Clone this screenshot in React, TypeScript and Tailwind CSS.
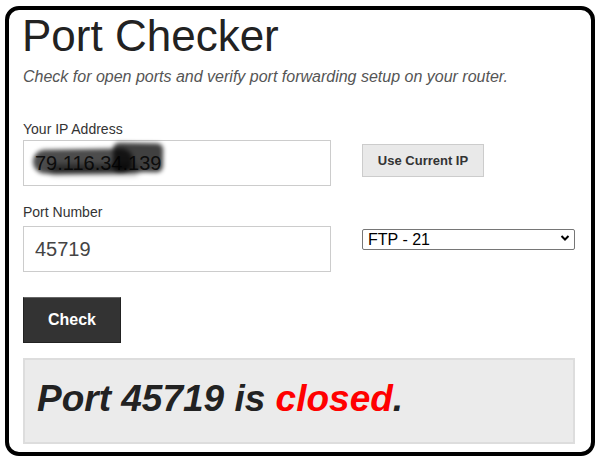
import { useState } from "react";

const ports = ["FTP - 21", "SSH - 22", "Telnet - 23", "SMTP - 25", "DNS - 53", "HTTP - 80", "HTTPS - 443"];

export default function App() {
  const [ip, setIp] = useState("79.116.34.139");
  const [port, setPort] = useState("45719");
  const [service, setService] = useState(ports[0]);

  return (
    <div className="w-[603px] h-[465px] bg-white font-['Liberation_Sans',Arial,sans-serif] pt-[6px] pl-[5px]">
      <div className="w-[590px] h-[450px] border-4 border-black rounded-[14px] pl-[14px]">
        <h1 className="text-[44px] leading-[50px] font-normal text-[#222] -ml-[1px] pt-[1px]">Port Checker</h1>
        <p className="mt-[7px] text-[16px] leading-[18px] italic text-[#555]">
          Check for open ports and verify port forwarding setup on your router.
        </p>

        <div className="mt-[35px] flex">
          <div className="w-[308px]">
            <label className="block text-[14px] leading-[16px] text-[#333]">Your IP Address</label>
            <div className="relative mt-[3px]">
              <input
                value={ip}
                onChange={(e) => setIp(e.target.value)}
                className="w-full h-[46px] border border-[#ccc] px-[11px] text-[20px] text-[#333] outline-none"
              />
              {/* redaction marker over the address */}
              <div className="absolute left-[10px] top-[9px] w-[100px] h-[24px] rounded-[12px] bg-black/70 blur-[2px] -rotate-1" />
              <div className="absolute left-[90px] top-[3px] w-[50px] h-[29px] rounded-[6px] bg-black/75 blur-[2px] rotate-1" />
              <div className="absolute left-[26px] top-[25px] w-[90px] h-[9px] rounded-full bg-black/55 blur-[3px]" />
            </div>
          </div>
          <div className="ml-[31px] pt-[23px]">
            <button
              onClick={() => setIp("79.116.34.139")}
              className="w-[122px] h-[33px] bg-[#e9e9e9] border border-[#ccc] text-[13px] font-bold text-[#333]"
            >
              Use Current IP
            </button>
          </div>
        </div>

        <div className="mt-[18px] flex">
          <div className="w-[308px]">
            <label className="block text-[14px] leading-[16px] text-[#333]">Port Number</label>
            <input
              value={port}
              onChange={(e) => setPort(e.target.value)}
              className="mt-[6px] w-full h-[46px] border border-[#ccc] px-[11px] text-[20px] text-[#444] outline-none"
            />
          </div>
          <div className="ml-[31px] pt-[24px]">
            <div className="relative w-[213px] h-[21px]">
              <select
                value={service}
                onChange={(e) => setService(e.target.value)}
                className="appearance-none w-full h-full border border-[#767676] rounded-[2px] pl-[5px] text-[16px] leading-[19px] text-black bg-white outline-none"
              >
                {ports.map((p) => (
                  <option key={p}>{p}</option>
                ))}
              </select>
              <svg className="pointer-events-none absolute right-[5px] top-[6px]" width="10" height="8" viewBox="0 0 10 8">
                <path d="M1.5 2 L5 5.5 L8.5 2" fill="none" stroke="#000" strokeWidth="2" />
              </svg>
            </div>
          </div>
        </div>

        <button className="mt-[25px] w-[98px] h-[46px] bg-[#333] border border-[#222] border-t-[#666] text-white font-bold text-[16px]">
          Check
        </button>

        <div className="mt-[15px] w-[552px] h-[86px] border-2 border-[#ddd] bg-[#ebebeb] pl-[12px] pt-[19px]">
          <p className="text-[37px] leading-[40px] font-bold italic text-[#222]">
            Port {port} is <span className="text-[#ff0000]">closed</span>.
          </p>
        </div>
      </div>
    </div>
  );
}
